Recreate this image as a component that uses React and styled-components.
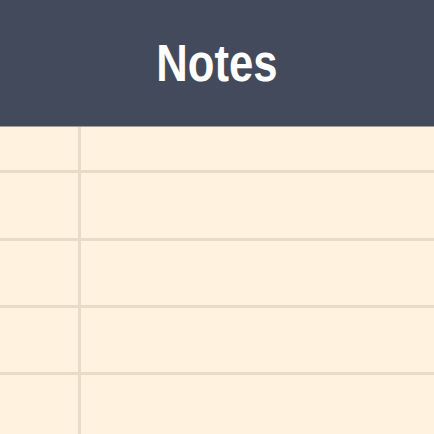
import React from "react";
import styled, { createGlobalStyle } from "styled-components";

const Global = createGlobalStyle`
  html, body { margin: 0; padding: 0; }
  body { width: 434px; height: 434px; overflow: hidden; background: #fff3df; }
`;

const Page = styled.div`
  width: 434px;
  height: 434px;
  display: flex;
  flex-direction: column;
  background: #fff3df;
  overflow: hidden;
`;

const Header = styled.header`
  height: 126px;
  flex: none;
  background: #434a5c;
  border-bottom: 1px solid #a89c86;
  display: flex;
  align-items: center;
  justify-content: center;
`;

const Title = styled.h1`
  margin: 0;
  color: #ffffff;
  font-family: "Liberation Sans", Arial, sans-serif;
  font-weight: 700;
  font-size: 51px;
  line-height: 1;
  transform: scaleX(0.855);
`;

const Sheet = styled.div`
  flex: 1;
  display: flex;
  flex-direction: column;
`;

const Row = styled.div`
  display: grid;
  grid-template-columns: 78px 3px 1fr;
  height: ${(p) => p.$h}px;
  flex: none;
  border-bottom: 3px solid #e7dcc7;
`;

const Margin = styled.div`
  background: #e7dcc7;
`;

const Cell = styled.div``;

const rows = [43, 65, 64, 64, 64];

export default function App() {
  return (
    <Page>
      <Global />
      <Header>
        <Title>Notes</Title>
      </Header>
      <Sheet>
        {rows.map((h, i) => (
          <Row key={i} $h={h}>
            <Cell />
            <Margin />
            <Cell />
          </Row>
        ))}
      </Sheet>
    </Page>
  );
}
